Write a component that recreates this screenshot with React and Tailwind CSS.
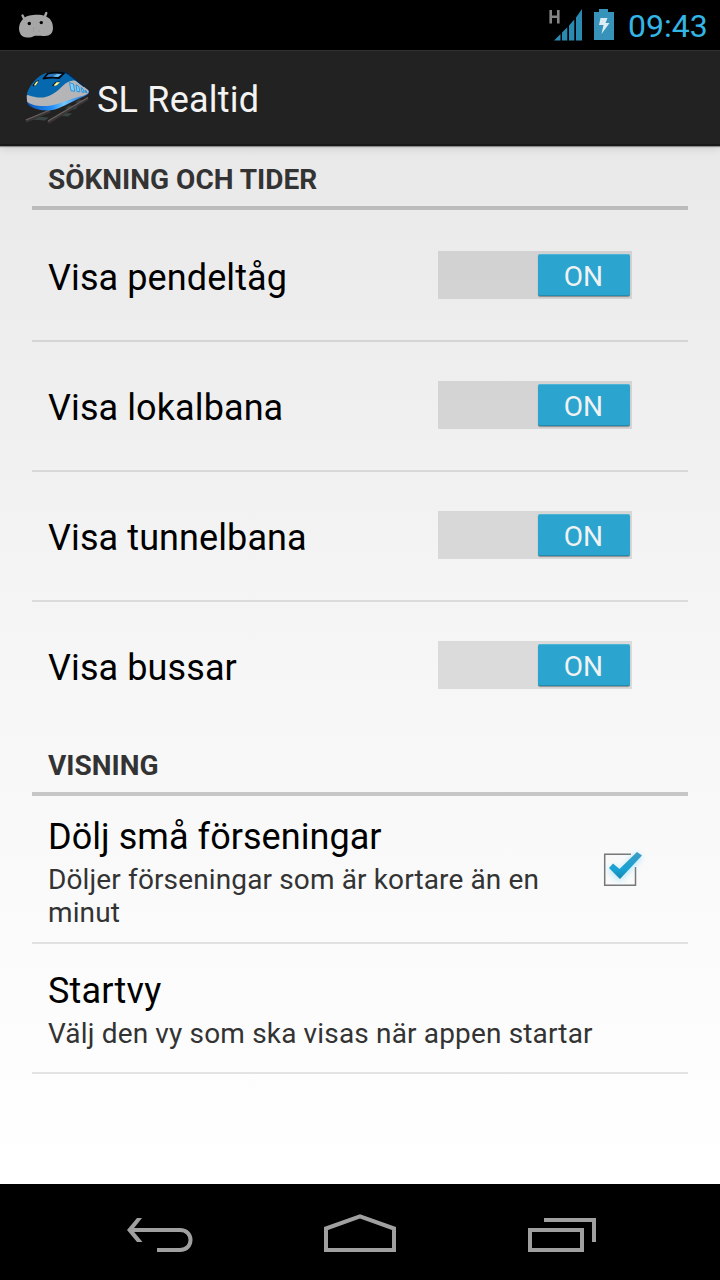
function Android() {
  return (
    <svg className="h-[50px] w-[36px]" viewBox="18 0 36 50" fill="none">
      <path d="M22.500 15.500l2.500 5M46.300 13l-2 5" stroke="#a6a6a6" strokeWidth="2.400" strokeLinecap="round" />
      <path d="M24 18C28 14.500 40 14 45 16C51 18 53 23 53 28C53 33 50 36 45 36C40 36 37 35.500 34 36C31 38 26 38 23 36.500C18 34 17 24 24 18Z" fill="#a6a6a6" />
      <circle cx="29.300" cy="23.500" r="1.700" fill="#000" />
      <circle cx="41.300" cy="22.600" r="1.700" fill="#000" />
      <path d="M33.500 28v4M38.500 31h1" stroke="#8f8f8f" strokeWidth="1" strokeDasharray="1 1.500" />
    </svg>
  );
}

function Signal() {
  return (
    <svg className="h-[50px] w-[36px]" viewBox="548 0 36 50">
      <path d="M550.700 10v13.500M558.300 10v13.500M550 16.700h9" stroke="#858585" strokeWidth="2.600" fill="none" />
      <path d="M554 40.500L560.500 34V40.500ZM562 32.500L567.300 27.200V40.500H562ZM569 25.500L574.300 19.500V40.500H569ZM576 17.500L582 9V40.500H576Z" fill="#298ab2" />
    </svg>
  );
}

function Battery() {
  return (
    <svg className="h-[50px] w-[20px]" viewBox="594 0 20 50">
      <path d="M599 9h9v3h6v28h-20V12h5Z" fill="#3893ba" />
      <path d="M600.500 18h7l-2 5h4l-8 11 2-9h-4.500Z" fill="#dcecf2" />
    </svg>
  );
}

function Train() {
  return (
    <svg className="h-[70px] w-[80px]" viewBox="10 62.500 80 70">
      <defs>
        <linearGradient id="under" x1="0" x2="1">
          <stop offset="0" stopColor="#0754b5" /><stop offset=".4" stopColor="#228df5" /><stop offset=".6" stopColor="#71c7ff" /><stop offset="1" stopColor="#1367cf" />
        </linearGradient>
      </defs>
      <path d="M56 115l12 1 4-3-11-1ZM65 108l10 1 3-3-9-1ZM75 102l8 1 3-3-7-1ZM35 116l14 1-4 3-14-1Z" fill="#394444" />
      <path d="M26 120.500L50 110.500M48 122L88 98" stroke="#3a3535" strokeWidth="3" fill="none" />
      <path d="M26 119.500L50 109.500M48 120.500L88 97" stroke="#68615f" strokeWidth="1.200" fill="none" />
      <path d="M26.700 97C28 87 36 77 44 73.500C52 71 62 71 68 73L88 89.500C90.500 92 88 94 85 95.500C76 99 62 107 55 109C44 111.500 31 108.500 27.500 103Z" fill="url(#under)" />
      <path d="M26.700 95L60 80L70 76L88 89.500C90.500 92.500 86 94.500 80 96C71 98.500 65 101 59 103C49 106.500 33 107 27 101Z" fill="#b5b5b7" />
      <path d="M26.700 94C28.500 86 36 77 44 73.500C52 71 62 71 68 73L77 80C69 79.500 66.500 82 62 86C54 94 47 97.500 40 97C35 97 29.500 95 26.700 94Z" fill="#0668ae" />
      <path d="M60 71.500C64 71.500 67 72 69 74L84 86" stroke="#002a52" strokeWidth="1.400" fill="none" />
      <path d="M43.500 78L48 72.800C53 72 59 72 64 72.700L59 77.500C54 77 49 77 43.500 78Z" fill="#2c75ba" stroke="#03090f" strokeWidth="1.800" strokeLinejoin="round" />
      <path d="M53 76l4-2.500h4.500l-3.500 3Z" fill="#69bff4" />
      <path d="M32.500 85l3-4 3.500-1.500-2 4.500-3.500 2ZM52 85l3.500-3.500 4.500-.7-3 4-4 1Z" fill="#101415" />
      <path d="M34.300 84.600l2-3 1.700-.6-1.700 3-1.500 1ZM54 84.700l2.500-2.600 3-.3-2.500 2.700-2.500.8Z" fill="#ffffa0" stroke="#ffffa0" strokeWidth=".4" />
      <path d="M69.500 82.200l4 1.300 1.200 7.300-3.700-.6ZM76 84.300l2.600 1.400 1.400 5.600-3-.3ZM81 87l2 1.400 1.200 3.500-2-.2ZM85 89.500l1.300 1 .7 1.600-1.300-.1Z" fill="#80d0ff" stroke="#1289dd" strokeWidth=".8" />
    </svg>
  );
}

function Header({ children, className }) {
  return (
    <h2 className={`flex items-center border-b-4 border-black/20 pl-4 text-[28px] font-bold text-[#333] ${className}`}>
      <span>{children}</span>
    </h2>
  );
}

function SwitchRow({ label, className }) {
  return (
    <div className={`flex items-center justify-between border-black/10 pr-[56px] pl-4 ${className}`}>
      <span className="pt-[6px] text-[36px] leading-[42px] tracking-[0.1px] text-black">{label}</span>
      <div className="flex h-12 w-[194px] justify-end bg-black/[0.11] pt-[3px] pr-[2px]">
        <div className="flex h-[42px] w-[92.500px] items-center justify-center rounded-[2px] border-t border-b border-t-[#4db4d6] border-b-[#218bb0] bg-[#2ba5cf] pt-[3px] pr-[1px] text-[28px] text-[#f2f2f2] shadow-[0_1px_1px_rgba(0,0,0,0.35)]">
          <span>ON</span>
        </div>
      </div>
    </div>
  );
}

function Check() {
  return (
    <svg className="h-[60px] w-[60px]" viewBox="594 839 60 60" fill="none">
      <defs>
        <filter id="glow" x="-50%" y="-50%" width="200%" height="200%"><feGaussianBlur stdDeviation="3" /></filter>
        <linearGradient id="tick" x1="0" y1="0" x2="0" y2="1"><stop stopColor="#3d9cc4" /><stop offset=".65" stopColor="#16a2d4" /><stop offset="1" stopColor="#1685ad" /></linearGradient>
      </defs>
      <path d="M631 854.200H604.700V885.300H635.500V867" stroke="#777" strokeWidth="1.500" />
      <path d="M611 868L619.500 876L639 855" stroke="#83d8f7" strokeWidth="8" opacity=".55" filter="url(#glow)" />
      <path d="M609 868l4-4.500 6.500 5.500 17.500-17 5 3.500-22 23.500Z" fill="url(#tick)" />
    </svg>
  );
}

export default function App() {
  return (
    <div className="flex h-[1280px] w-[720px] flex-col overflow-hidden bg-black font-[Roboto,sans-serif]">
      <div className="flex h-[50px] shrink-0 items-center pr-[12px] pl-[18px]">
        <Android />
        <div className="ml-auto flex items-center">
          <Signal />
          <div className="w-[10px]" />
          <Battery />
          <span className="ml-[14px] w-[80px] pt-[2px] text-[32px] whitespace-nowrap text-[#33b5e5]">09:43</span>
        </div>
      </div>
      <header className="z-10 flex h-[96px] shrink-0 items-center border-t border-b-2 border-t-[#303030] border-b-[#181818] bg-[#222] pl-[10px] shadow-[0_1px_10px_rgba(0,0,0,0.15),0_1px_1px_rgba(0,0,0,0.35)]">
        <Train />
        <h1 className="ml-[7px] pt-[5px] text-[36px] tracking-[0.200px] text-[#f3f3f3]">SL Realtid</h1>
      </header>
      <main className="flex min-h-0 flex-1 flex-col bg-linear-to-b from-[#e9e9e9] via-[#f6f6f6] to-white px-8">
        <Header className="h-16 pt-[8px]">SÖKNING OCH TIDER</Header>
        <SwitchRow label="Visa pendeltåg" className="h-[132px] border-b-2" />
        <SwitchRow label="Visa lokalbana" className="h-[130px] border-b-2 pb-[2px]" />
        <SwitchRow label="Visa tunnelbana" className="h-[130px] border-b-2 pb-[2px]" />
        <SwitchRow label="Visa bussar" className="h-[128px] pb-[2px]" />
        <Header className="h-[66px] pt-[10px]">VISNING</Header>
        <div className="flex h-[148px] items-center justify-between border-b-2 border-black/10 pr-[34px] pl-4">
          <div className="w-[520px] pt-[6px]">
            <div className="text-[36px] leading-[44px] tracking-[0.050px] text-black">Dölj små förseningar</div>
            <div className="pt-[4px] text-[28px] leading-[33px] tracking-[0.130px] text-[#333]">Döljer förseningar som är kortare än en<br />minut</div>
          </div>
          <Check />
        </div>
        <div className="flex h-[130px] flex-col justify-center border-b-2 border-black/10 pt-[2px] pl-4">
          <div className="text-[36px] leading-[44px] tracking-[0.200px] text-black">Startvy</div>
          <div className="pt-[4px] text-[28px] leading-[33px] tracking-[0.160px] text-[#333]">Välj den vy som ska visas när appen startar</div>
        </div>
      </main>
      <nav className="flex h-24 shrink-0 items-center pl-[126px]">
        <svg className="h-[70px] w-[68px]" viewBox="126 1197 68 70" fill="none" stroke="#a0a0a0" strokeWidth="4">
          <path d="M129 1230H180C194 1230 194 1250 180 1250H157" />
          <path d="M142 1218h-5l-10 12 10 12h5.500l-10-12 9.500-12Z" fill="#a0a0a0" stroke="none" />
        </svg>
        <svg className="ml-[129px] h-[70px] w-[74px]" viewBox="323 1197 74 70" fill="none" stroke="#a0a0a0" strokeWidth="4">
          <path d="M326 1250V1228.500L360 1216.300L394 1228.500V1250Z" />
        </svg>
        <svg className="ml-[130px] h-[70px] w-[70px]" viewBox="527 1197 70 70" fill="none" stroke="#a0a0a0" strokeWidth="4">
          <path d="M530 1230H582V1250H530ZM544 1220H594V1242" />
        </svg>
      </nav>
    </div>
  );
}
